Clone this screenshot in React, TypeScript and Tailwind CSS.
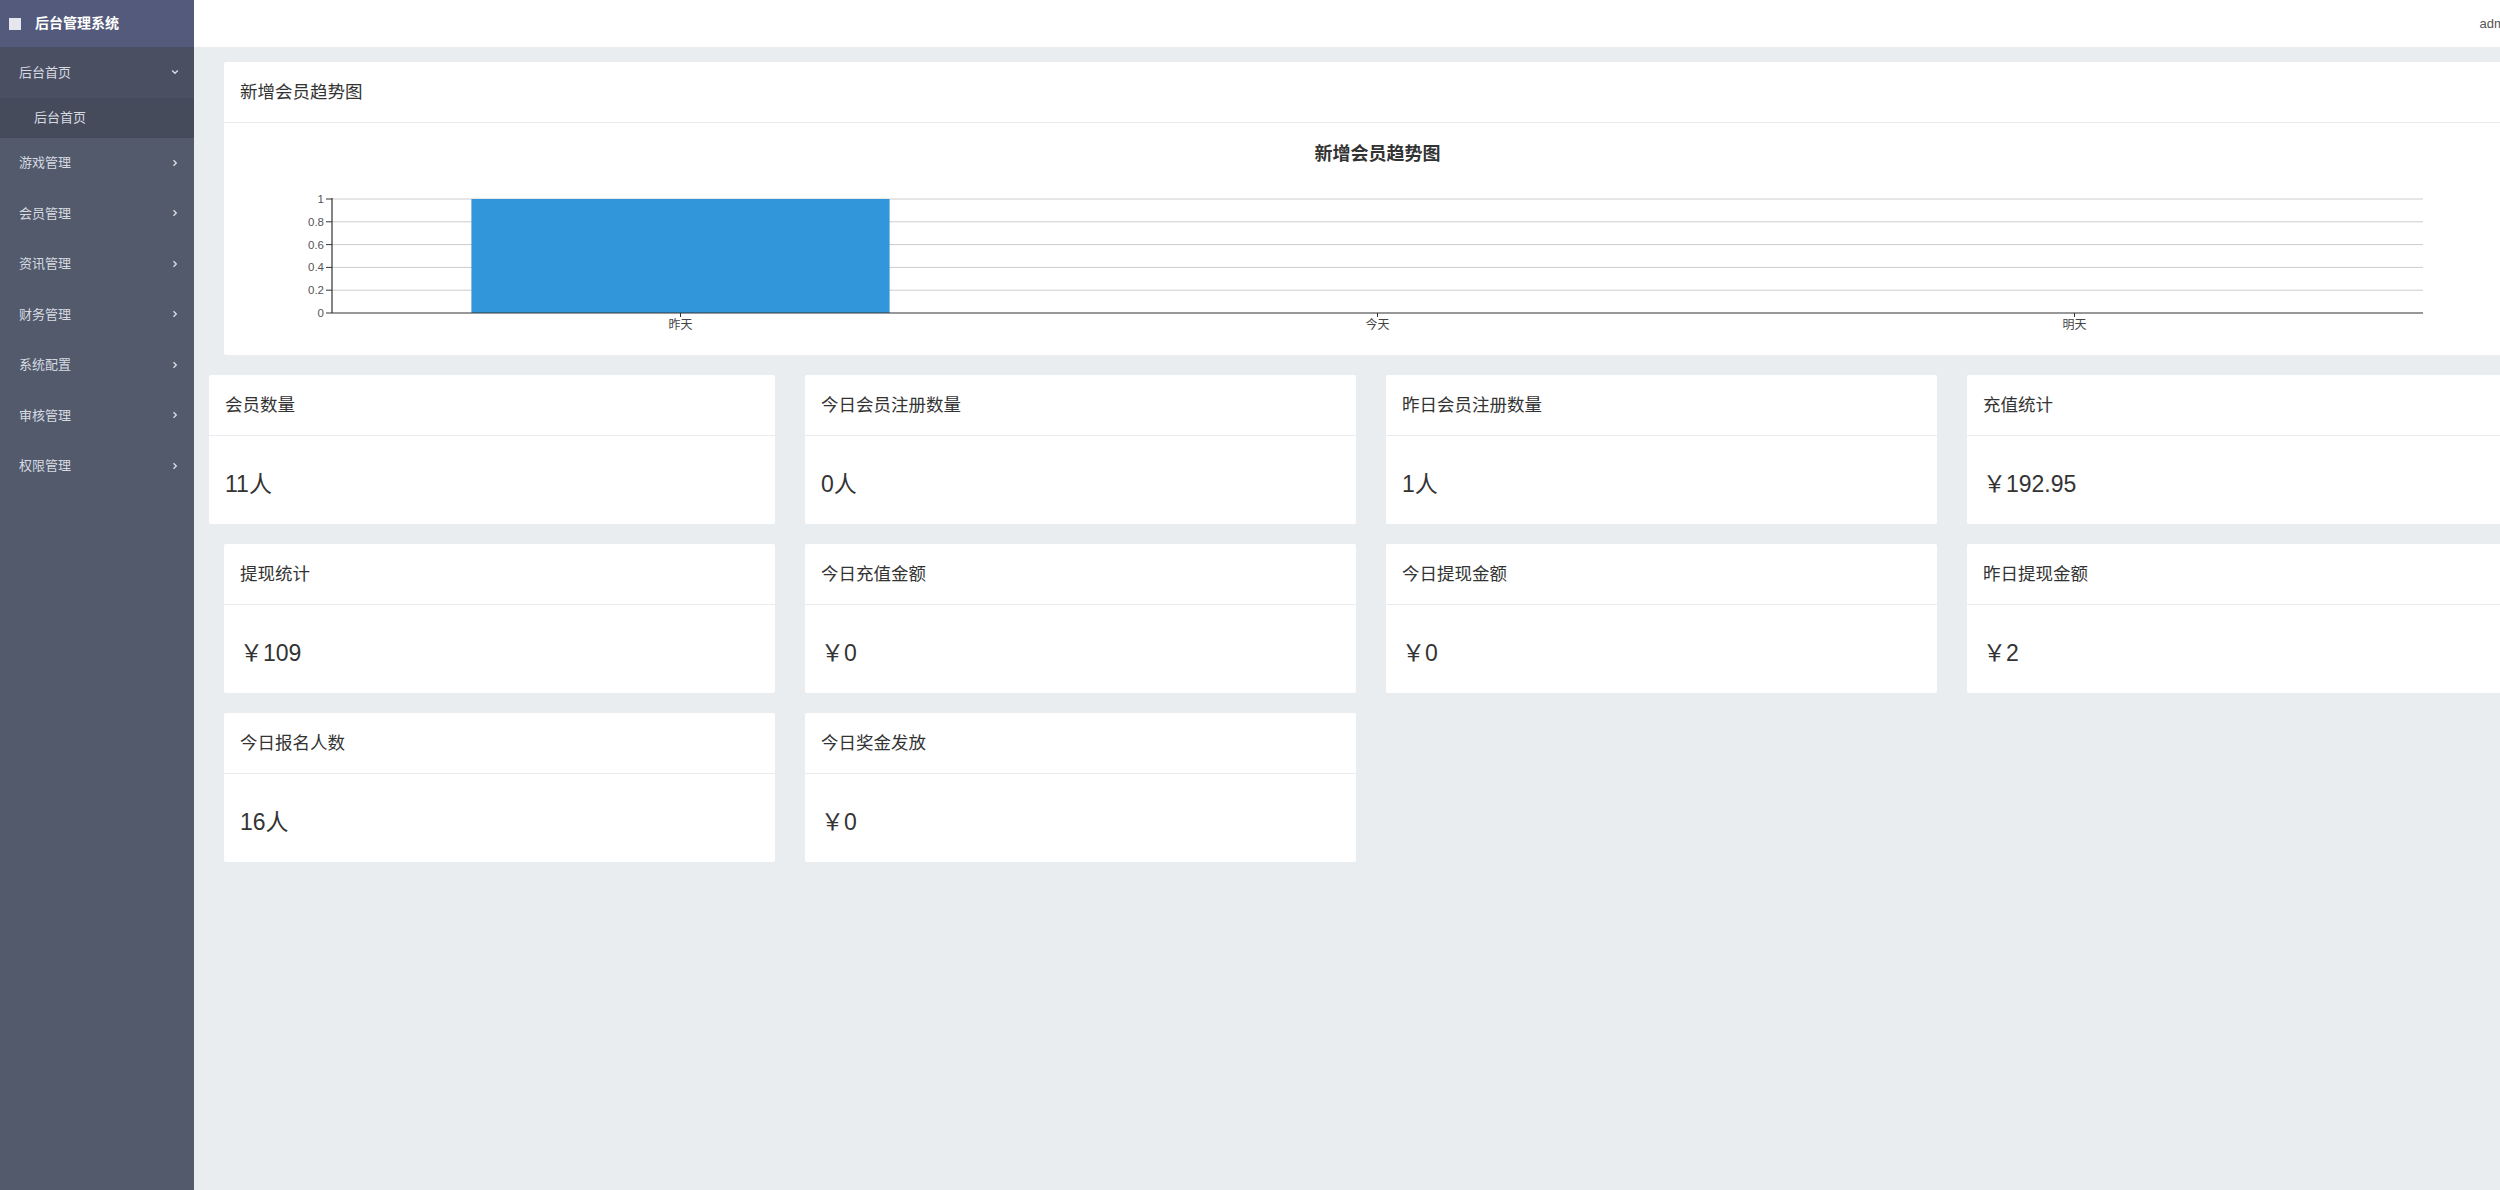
import { ReactNode } from 'react';

const font = { fontFamily: '"Liberation Sans", "Noto Sans CJK SC", sans-serif' };

const menus = ['游戏管理', '会员管理', '资讯管理', '财务管理', '系统配置', '审核管理', '权限管理'];

const stats = [
  { title: '会员数量', value: '11人' },
  { title: '今日会员注册数量', value: '0人' },
  { title: '昨日会员注册数量', value: '1人' },
  { title: '充值统计', value: '￥192.95' },
  { title: '提现统计', value: '￥109' },
  { title: '今日充值金额', value: '￥0' },
  { title: '今日提现金额', value: '￥0' },
  { title: '昨日提现金额', value: '￥2' },
  { title: '今日报名人数', value: '16人' },
  { title: '今日奖金发放', value: '￥0' },
];

function Chevron({ down }: { down?: boolean }) {
  return (
    <svg width="8" height="8" viewBox="0 0 8 8" className="text-[#dde0e7]">
      {down ? (
        <polyline points="1.2,2.5 4,5.3 6.8,2.5" fill="none" stroke="currentColor" strokeWidth="1.3" />
      ) : (
        <polyline points="2.5,1.2 5.3,4 2.5,6.8" fill="none" stroke="currentColor" strokeWidth="1.3" />
      )}
    </svg>
  );
}

function MenuItem({ label, children, className }: { label: string; children?: ReactNode; className?: string }) {
  return (
    <div className={`h-[50.5px] flex items-center justify-between pl-[19px] pr-[15px] text-[13px] text-[#d6dae2] ${className ?? ''}`}>
      <span>{label}</span>
      {children ?? <Chevron />}
    </div>
  );
}

function TrendChart() {
  const left = 108;
  const right = 2199;
  const top = 76;
  const bottom = 190;
  const step = (bottom - top) / 5;
  const cat = (right - left) / 3;
  const labels = ['昨天', '今天', '明天'];
  const ticks = ['1', '0.8', '0.6', '0.4', '0.2', '0'];

  return (
    <svg width="2294" height="232" className="block">
      <text x={(left + right) / 2} y="37" textAnchor="middle" fontSize="18" fontWeight="bold" fill="#333" style={font}>
        新增会员趋势图
      </text>
      {ticks.map((t, i) => {
        const y = top + i * step;
        return (
          <g key={t}>
            {i < 5 && <line x1={left} x2={right} y1={y} y2={y} stroke="#cccccc" strokeWidth="1" />}
            <line x1={left - 6} x2={left} y1={y} y2={y} stroke="#333" strokeWidth="1" />
            <text x={left - 8} y={y + 4} textAnchor="end" fontSize="11.5" fill="#555" style={font}>
              {t}
            </text>
          </g>
        );
      })}
      <rect x={left + cat * 0.2} y={top} width={cat * 0.6} height={bottom - top} fill="#3296db" />
      <line x1={left} x2={left} y1={top - 1} y2={bottom} stroke="#333" strokeWidth="1.2" />
      <line x1={left} x2={right} y1={bottom} y2={bottom} stroke="#333" strokeWidth="1.2" />
      {labels.map((l, i) => {
        const x = left + cat * (i + 0.5);
        return (
          <g key={l}>
            <line x1={x} x2={x} y1={bottom} y2={bottom + 4} stroke="#333" strokeWidth="1" />
            <text x={x} y={bottom + 16} textAnchor="middle" fontSize="12" fill="#444" style={font}>
              {l}
            </text>
          </g>
        );
      })}
    </svg>
  );
}

function StatCard({ title, value }: { title: string; value: string }) {
  return (
    <div className="bg-white rounded-[2px] h-[149px] flex flex-col">
      <div className="h-[61px] border-b border-[#e8ecf1] flex items-center pl-[16px] text-[17.5px] text-[#333]">
        {title}
      </div>
      <div className="pt-[35px] pl-[16px] text-[23px] leading-[26px] text-[#333]">{value}</div>
    </div>
  );
}

export default function App() {
  return (
    <div className="w-full h-[1190px] overflow-hidden bg-[#e9edf0]" style={font}>
      <div className="flex w-[2548px] h-full">
        <aside className="w-[194px] shrink-0 bg-[#525a6b] flex flex-col">
          <div className="h-[47px] bg-[#535a7c] flex items-center pl-[9px]">
            <div className="w-[12px] h-[12px] bg-[#e6e7ee]" />
            <span className="ml-[14px] text-[14px] font-semibold text-white">后台管理系统</span>
          </div>
          <MenuItem label="后台首页" className="bg-[#4a5062]">
            <Chevron down />
          </MenuItem>
          <div className="h-[40px] bg-[#464b5b] flex items-center pl-[34px] text-[13px] text-[#d6dae2]">后台首页</div>
          {menus.map((m) => (
            <MenuItem key={m} label={m} />
          ))}
        </aside>

        <main className="w-[2354px] shrink-0 flex flex-col">
          <header className="h-[47px] bg-white flex items-center justify-end pr-[33px] text-[13px] text-[#555]">
            admin
          </header>
          <div className="px-[15px] pt-[15px]">
            <div className="mx-[15px] bg-white rounded-[2px] h-[293px]">
              <div className="h-[61px] border-b border-[#e8ecf1] flex items-center pl-[16px] text-[17.5px] text-[#333]">
                新增会员趋势图
              </div>
              <TrendChart />
            </div>
            <div className="grid grid-cols-4 gap-y-[20px] mt-[20px]">
              {stats.map((s, i) => (
                <div key={s.title} className={i === 0 ? 'pr-[15px]' : 'px-[15px]'}>
                  <StatCard title={s.title} value={s.value} />
                </div>
              ))}
            </div>
          </div>
        </main>
      </div>
    </div>
  );
}
